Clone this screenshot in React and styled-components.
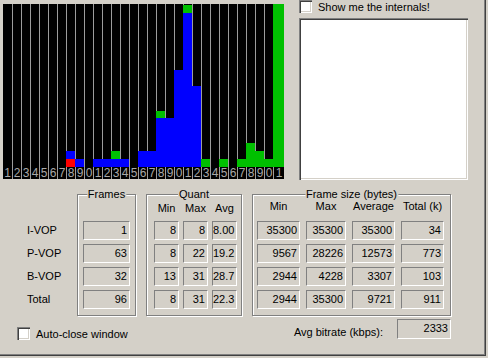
import React from "react";
import styled, { createGlobalStyle } from "styled-components";

const GlobalStyle = createGlobalStyle`
  html, body {
    margin: 0;
    padding: 0;
    background: #d4d0c8;
  }
  body {
    font-family: "Liberation Sans", Arial, sans-serif;
    font-size: 11px;
    color: #000;
  }
`;

// px heights of [I-VOP, P-VOP, B-VOP] per quant column
const bars = [
  [0, 0, 0], [0, 0, 0], [0, 0, 0], [0, 0, 0], [0, 0, 0], [0, 0, 0], [0, 0, 0],
  [8, 8, 0], [0, 8, 0], [0, 0, 0], [0, 8, 0], [0, 8, 0], [0, 8, 8], [0, 8, 0],
  [0, 0, 0], [0, 16, 0], [0, 16, 0], [0, 49, 7], [0, 49, 0], [0, 97, 0],
  [0, 154, 8], [0, 81, 0], [0, 0, 8], [0, 0, 0], [0, 0, 8], [0, 0, 0],
  [0, 0, 8], [0, 0, 24], [0, 0, 16], [0, 0, 8], [0, 0, 163],
];

const rows = [
  { name: "I-VOP", frames: 1, quant: [8, 8, "8.00"], size: [35300, 35300, 35300, 34] },
  { name: "P-VOP", frames: 63, quant: [8, 22, "19.2"], size: [9567, 28226, 12573, 773] },
  { name: "B-VOP", frames: 32, quant: [13, 31, "28.7"], size: [2944, 4228, 3307, 103] },
  { name: "Total", frames: 96, quant: [8, 31, "22.3"], size: [2944, 35300, 9721, 911] },
];

const barColors = ["#ff0000", "#0000ff", "#00c000"];

const App = () => {
  return (
    <Window>
      <GlobalStyle />
      <Top>
        <Chart>
          {bars.map((col, i) => (
            <Column key={i} $first={i === 0}>
              <BarArea>
                {col.map((h, k) =>
                  h > 0 ? <Bar key={k} $color={barColors[k]} style={{ height: h }} /> : null
                )}
              </BarArea>
              <Digit>{(i + 1) % 10}</Digit>
            </Column>
          ))}
        </Chart>
        <Side>
          <CheckRow>
            <CheckBox />
            <span>Show me the internals!</span>
          </CheckRow>
          <InternalsBox />
        </Side>
      </Top>

      <Stats>
        <RowLabels>
          {rows.map((r) => (
            <RowLabel key={r.name}>{r.name}</RowLabel>
          ))}
        </RowLabels>

        <Group $width={59} $pad="26px 5px 0 5px">
          <GroupTitle>Frames</GroupTitle>
          <Fields $cols="47px">
            {rows.map((r) => (
              <Field key={r.name}>{r.frames}</Field>
            ))}
          </Fields>
        </Group>

        <Group $width={96} $pad="7px 0 0 7px" $ml={10}>
          <GroupTitle>Quant</GroupTitle>
          <Headers $cols="25px 25px 25px" $gap={4} $mb={6}>
            <span>Min</span>
            <span>Max</span>
            <span>Avg</span>
          </Headers>
          <Fields $cols="25px 25px 25px" $gap={4}>
            {rows.map((r) =>
              r.quant.map((v, k) => <Field key={r.name + k}>{v}</Field>)
            )}
          </Fields>
        </Group>

        <Group $width={199} $pad="5px 0 0 4px" $ml={10}>
          <GroupTitle>Frame size (bytes)</GroupTitle>
          <Headers $cols="43px 40px 43px 43px" $gap={6} $mb={8}>
            <span>Min</span>
            <span>Max</span>
            <span>Average</span>
            <span>Total (k)</span>
          </Headers>
          <Fields $cols="43px 40px 43px 43px" $gap={6}>
            {rows.map((r) =>
              r.size.map((v, k) => <Field key={r.name + k}>{v}</Field>)
            )}
          </Fields>
        </Group>
      </Stats>

      <Bottom>
        <CheckRow $ml={17} $mt={8}>
          <CheckBox />
          <span>Auto-close window</span>
        </CheckRow>
        <Bitrate>
          <BitrateLabel>Avg bitrate (kbps):</BitrateLabel>
          <BitrateField>2333</BitrateField>
        </Bitrate>
      </Bottom>
    </Window>
  );
};

const Window = styled.div`
  width: 486px;
  height: 356px;
  box-sizing: border-box;
  box-shadow: inset -1px -1px 0 #404040, inset -2px -2px 0 #808080;
  display: flex;
  flex-direction: column;
`;

const Top = styled.div`
  display: flex;
  height: 180px;
`;

const Chart = styled.div`
  margin: 4px 0 0 3px;
  width: 281px;
  height: 175px;
  background: #000;
  display: grid;
  grid-template-columns: repeat(30, 9px) 11px;
`;

const Column = styled.div`
  display: flex;
  flex-direction: column;
  box-sizing: border-box;
  border-left: ${(p) => (p.$first ? "none" : "1px solid #9c9c9c")};
`;

const BarArea = styled.div`
  height: 163px;
  display: flex;
  flex-direction: column-reverse;
`;

const Bar = styled.div`
  background: ${(p) => p.$color};
  margin-left: -1px;
`;

const Digit = styled.div`
  height: 12px;
  line-height: 13px;
  font-size: 12px;
  color: #a8a8a8;
  text-align: center;
  overflow: hidden;
`;

const Side = styled.div`
  margin-left: 15px;
  display: flex;
  flex-direction: column;
  gap: 5px;
`;

const CheckRow = styled.div`
  display: flex;
  align-items: center;
  gap: 6px;
  height: 13px;
  margin-left: ${(p) => p.$ml || 0}px;
  margin-top: ${(p) => p.$mt || 0}px;
`;

const CheckBox = styled.div`
  width: 13px;
  height: 13px;
  box-sizing: border-box;
  background: #fff;
  box-shadow: inset 1px 1px 0 #808080, inset 2px 2px 0 #404040,
    inset -1px -1px 0 #fff, inset -2px -2px 0 #d4d0c8;
`;

const InternalsBox = styled.div`
  width: 169px;
  height: 162px;
  background: #fff;
  box-shadow: inset 1px 1px 0 #808080, inset 2px 2px 0 #404040,
    inset -1px -1px 0 #fff, inset -2px -2px 0 #d4d0c8;
`;

const Stats = styled.div`
  display: flex;
  align-items: flex-start;
  margin-top: 14px;
`;

const RowLabels = styled.div`
  width: 50px;
  padding: 27px 0 0 27px;
  display: flex;
  flex-direction: column;
  gap: 4px;
`;

const RowLabel = styled.div`
  height: 19px;
  line-height: 19px;
`;

const Group = styled.div`
  position: relative;
  box-sizing: border-box;
  width: ${(p) => p.$width}px;
  height: 122px;
  margin-left: ${(p) => p.$ml || 0}px;
  padding: ${(p) => p.$pad};
  border: 1px solid #808080;
  box-shadow: inset 1px 1px 0 #fff, 1px 1px 0 #fff;
`;

const GroupTitle = styled.div`
  position: absolute;
  top: -7px;
  left: 50%;
  transform: translateX(-50%);
  padding: 0 1px;
  line-height: 13px;
  background: #d4d0c8;
  white-space: nowrap;
`;

const Headers = styled.div`
  display: grid;
  grid-template-columns: ${(p) => p.$cols};
  column-gap: ${(p) => p.$gap}px;
  line-height: 13px;
  margin-bottom: ${(p) => p.$mb}px;
  text-align: center;
`;

const Fields = styled.div`
  display: grid;
  grid-template-columns: ${(p) => p.$cols};
  column-gap: ${(p) => p.$gap || 0}px;
  row-gap: 4px;
`;

const Field = styled.div`
  height: 19px;
  box-sizing: border-box;
  border-top: 1px solid #808080;
  border-left: 1px solid #808080;
  border-bottom: 1px solid #fff;
  border-right: 1px solid #fff;
  padding: 2px 2px 0 0;
  line-height: 13px;
  text-align: right;
  white-space: nowrap;
  overflow: hidden;
`;

const Bottom = styled.div`
  display: flex;
  align-items: flex-start;
  justify-content: space-between;
  margin-top: 3px;
  padding-right: 35px;
`;

const Bitrate = styled.div`
  display: flex;
  align-items: flex-start;
  gap: 14px;
`;

const BitrateLabel = styled.span`
  padding-top: 7px;
  line-height: 13px;
`;

const BitrateField = styled(Field)`
  width: 54px;
  height: 20px;
`;

export default App;
